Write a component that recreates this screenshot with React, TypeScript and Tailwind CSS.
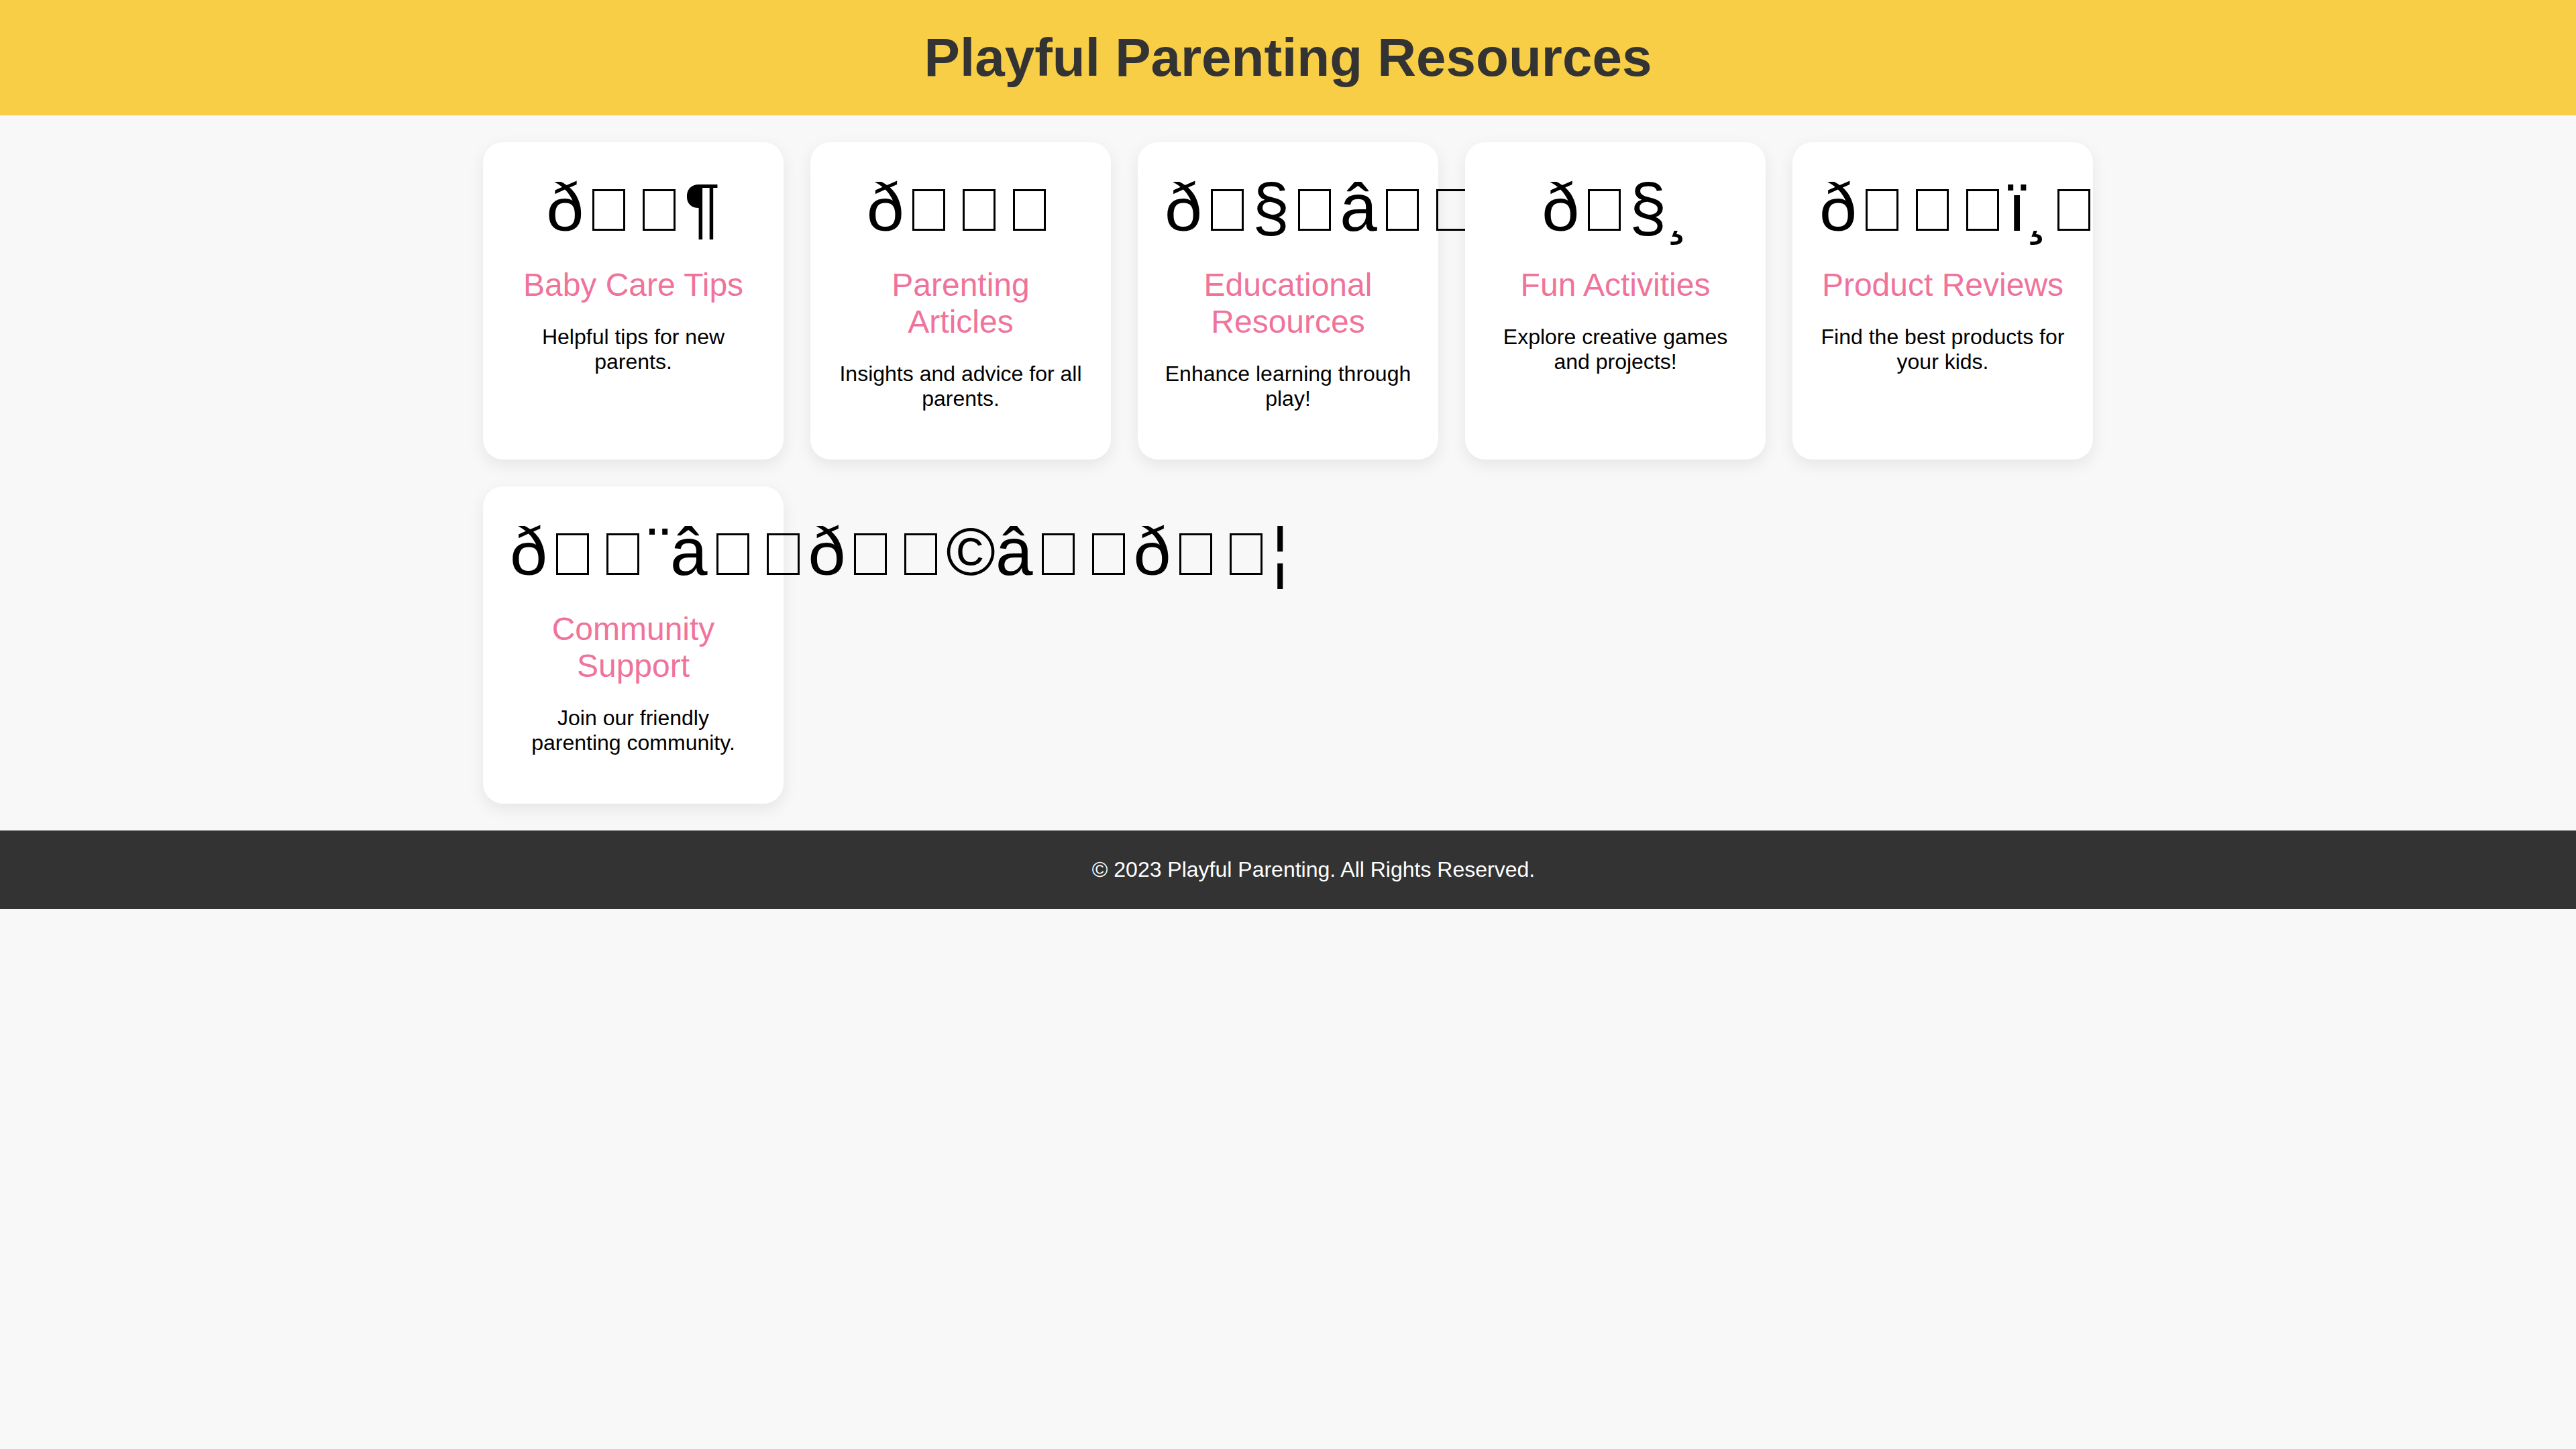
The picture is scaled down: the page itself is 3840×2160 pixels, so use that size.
const resources = [
  {
    icon: "\u00f0\u009f\u0091\u00b6",
    title: "Baby Care Tips",
    text: "Helpful tips for new parents.",
  },
  {
    icon: "\u00f0\u009f\u0093\u009a",
    title: "Parenting Articles",
    text: "Insights and advice for all parents.",
  },
  {
    icon: "\u00f0\u009f\u00a7\u0091\u00e2\u0080\u008d\u00f0\u009f\u008f\u00ab",
    title: "Educational Resources",
    text: "Enhance learning through play!",
  },
  {
    icon: "\u00f0\u009f\u00a7\u00b8",
    title: "Fun Activities",
    text: "Explore creative games and projects!",
  },
  {
    icon: "\u00f0\u009f\u009b\u008d\u00ef\u00b8\u008f",
    title: "Product Reviews",
    text: "Find the best products for your kids.",
  },
  {
    icon: "\u00f0\u009f\u0091\u00a8\u00e2\u0080\u008d\u00f0\u009f\u0091\u00a9\u00e2\u0080\u008d\u00f0\u009f\u0091\u00a6",
    title: "Community Support",
    text: "Join our friendly parenting community.",
  },
];

// control bytes show up as empty "tofu" boxes in the original
function Icon({ text }: { text: string }) {
  return (
    <div className="whitespace-nowrap text-[100px] leading-[115px]">
      {Array.from(text).map((ch, i) => {
        const code = ch.charCodeAt(0);
        if (code >= 0x80 && code <= 0x9f) {
          return (
            <span
              key={i}
              className="mx-[13px] inline-block h-[62px] w-[49px] border-[3px] border-black align-baseline"
            />
          );
        }
        return <span key={i}>{ch}</span>;
      })}
    </div>
  );
}

export default function App() {
  return (
    <div className="min-h-screen bg-[#f8f8f8] font-['Liberation_Sans',Arial,sans-serif] text-black">
      {/* header */}
      <header className="bg-[#f8ce46] py-[40px] text-center">
        <h1 className="m-0 text-[80px] leading-[92px] font-bold text-[#333333]">
          Playful Parenting Resources
        </h1>
      </header>

      <main className="p-[40px]">
        <div className="mx-auto grid max-w-[2400px] grid-cols-[repeat(auto-fill,minmax(400px,1fr))] gap-[40px]">
          {resources.map((r) => (
            <div
              key={r.title}
              className="relative rounded-[30px] bg-white p-[40px] text-center shadow-[0_8px_24px_rgba(0,0,0,0.08)]"
            >
              <Icon text={r.icon} />
              <h3 className="mt-[30px] text-[48px] leading-[55px] font-normal text-[#ef739b]">
                {r.title}
              </h3>
              <p className="my-[32px] text-[32px] leading-[37px]">{r.text}</p>
            </div>
          ))}
        </div>
      </main>

      <footer className="bg-[#333333] py-[40px] pl-[76px] text-center text-[32px] leading-[37px] text-white">
        © 2023 Playful Parenting. All Rights Reserved.
      </footer>
    </div>
  );
}
